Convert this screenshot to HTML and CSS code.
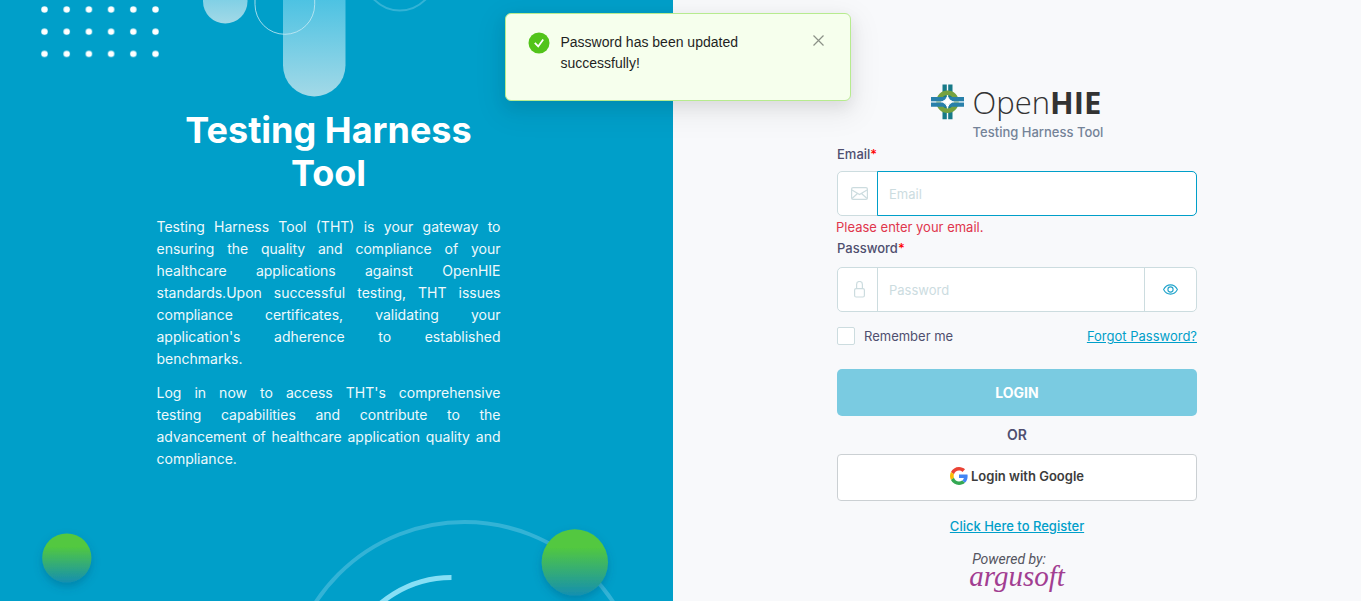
FILE: index.html
```html
<!DOCTYPE html>
<html lang="en">
<head>
<meta charset="utf-8">
<meta name="viewport" content="width=device-width, initial-scale=1">
<title>Testing Harness Tool - Login</title>
<link rel="stylesheet" href="styles.css">
</head>
<body>
<div class="page">
  <section class="intro">
    <svg class="decor decor-top" width="450" height="110" viewBox="0 0 450 110" aria-hidden="true">
      <defs>
        <linearGradient id="pill" x1="0" y1="0" x2="0" y2="1">
          <stop offset=".25" stop-color="#48c1e2"/>
          <stop offset="1" stop-color="#a3d9e7"/>
        </linearGradient>
        <pattern id="dots" x="33.400" y="-1.600" width="22.200" height="22.200" patternUnits="userSpaceOnUse">
          <circle cx="11.100" cy="11.100" r="3.200" fill="#fff"/>
        </pattern>
      </defs>
      <rect x="34" y="0" width="132" height="64" fill="url(#dots)"/>
      <rect x="203" y="-60" width="44.500" height="83.500" rx="22.250" fill="url(#pill)"/>
      <rect x="283" y="-40" width="62.500" height="136.500" rx="31.250" fill="url(#pill)"/>
      <rect x="255" y="-60" width="59.700" height="94.300" rx="29.850" fill="none" stroke="#c8eaf4" stroke-opacity=".8"/>
      <circle cx="399.800" cy="-25" r="35.500" fill="none" stroke="#33b3d6" stroke-width="2"/>
    </svg>
    <svg class="decor decor-bottom" width="673" height="101" viewBox="0 500 673 101" aria-hidden="true">
      <defs>
        <linearGradient id="ball" x1="0" y1="0" x2="0" y2="1">
          <stop offset=".27" stop-color="#52c83f"/>
          <stop offset="1" stop-color="#158fb0"/>
        </linearGradient>
        <filter id="shade" x="-50%" y="-50%" width="200%" height="200%">
          <feDropShadow dx="0" dy="4" stdDeviation="4" flood-color="#004a66" flood-opacity=".3"/>
        </filter>
      </defs>
      <circle cx="464.500" cy="700" r="178" fill="none" stroke="#33b3d6" stroke-width="4"/>
      <path d="M451.500 577.500A110 110 0 0 0 353.200 638" fill="none" stroke="#86dff5" stroke-width="5"/>
      <circle cx="66.800" cy="558" r="24.600" fill="url(#ball)" filter="url(#shade)"/>
      <circle cx="574.800" cy="562.500" r="33.200" fill="url(#ball)" filter="url(#shade)"/>
    </svg>
    <div class="intro-body">
      <h1 class="intro-title">Testing Harness Tool</h1>
      <p class="intro-text">Testing Harness Tool (THT) is your gateway to ensuring the quality and compliance of your healthcare applications against OpenHIE standards.Upon successful testing, THT issues compliance certificates, validating your application's adherence to established benchmarks.</p>
      <p class="intro-text">Log in now to access THT's comprehensive testing&nbsp;capabilities and contribute to the advancement of healthcare application quality and compliance.</p>
    </div>
  </section>

  <main class="panel">
    <form class="login" novalidate>
      <div class="brand">
        <svg class="brand-mark" width="33" height="36" viewBox="0 0 33 36" aria-hidden="true">
          <path d="M11.500 .4h4.300v34.800h-4.300zM17.200 .4h4.300v34.800h-4.300z" fill="#177a88"/>
          <circle cx="16.500" cy="17.800" r="9" fill="none" stroke="#76a23f" stroke-width="4.600"/>
          <path d="M0 13h33v4.300H0zM0 18.500h33v4.300H0z" fill="#2880aa"/>
          <path d="M0 17.900h10M23 17.900h10" stroke="#a9cfe0"/>
          <path d="M16.500 12.500q1.500 3.900 5.300 5.300-3.800 1.400-5.300 5.300-1.500-3.900-5.300-5.300 3.800-1.400 5.300-5.300z" fill="#fff" stroke="#fff"/>
        </svg>
        <div class="brand-words">
          <span class="brand-name">Open<b>HIE</b></span>
          <span class="brand-sub">Testing Harness Tool</span>
        </div>
      </div>

      <label class="label" for="email">Email<span class="required">*</span></label>
      <div class="field">
        <span class="addon">
          <svg width="17" height="13" viewBox="0 0 17 13" fill="none" stroke="#ccdcdf" stroke-width="1.200" aria-hidden="true"><rect x=".6" y=".6" width="15.800" height="11.800" rx="1.500"/><path d="M1 3l7.500 4.500L16 3M1 11.500l5.500-5M16 11.500l-5.500-5"/></svg>
        </span>
        <input class="input input-active" id="email" type="email" placeholder="Email">
      </div>
      <p class="error">Please enter your email.</p>

      <label class="label label-password" for="password">Password<span class="required">*</span></label>
      <div class="field">
        <span class="addon">
          <svg width="11" height="17" viewBox="0 0 11 17" fill="none" stroke="#ccdcdf" stroke-width="1.200" aria-hidden="true"><rect x=".6" y="7.600" width="9.800" height="8.400" rx="1.500"/><path d="M2.600 7.500V3.400a2.900 2.900 0 0 1 5.800 0v4.100"/></svg>
        </span>
        <input class="input input-middle" id="password" type="password" placeholder="Password">
        <button class="reveal" type="button" aria-label="Show password">
          <svg width="15" height="11" viewBox="0 0 15 11" fill="none" stroke="#1fa3cb" stroke-width="1.100" aria-hidden="true"><path d="M.6 5.500S3 .9 7.500.9s6.900 4.600 6.900 4.600-2.400 4.600-6.900 4.600S.6 5.500.6 5.500z"/><circle cx="7.500" cy="5.500" r="2.600"/></svg>
        </button>
      </div>

      <div class="options">
        <label class="remember"><input class="check" type="checkbox">Remember me</label>
        <a class="link" href="#">Forgot Password?</a>
      </div>

      <button class="submit" type="submit">LOGIN</button>
      <p class="or">OR</p>
      <button class="google" type="button">
        <svg class="google-mark" width="18" height="18" viewBox="0 0 48 48" aria-hidden="true">
          <path fill="#ea4335" d="M24 9.500c3.540 0 6.710 1.220 9.210 3.600l6.850-6.850C35.900 2.380 30.470 0 24 0 14.620 0 6.510 5.380 2.560 13.220l7.980 6.190C12.430 13.720 17.740 9.500 24 9.500z"/>
          <path fill="#4285f4" d="M46.980 24.550c0-1.570-.15-3.090-.38-4.550H24v9.020h12.940c-.58 2.960-2.260 5.480-4.780 7.180l7.730 6c4.510-4.180 7.090-10.360 7.090-17.650z"/>
          <path fill="#fbbc05" d="M10.530 28.590c-.48-1.450-.76-2.990-.76-4.590s.27-3.140.76-4.590l-7.980-6.190C.92 16.460 0 20.120 0 24c0 3.880.92 7.540 2.560 10.780l7.970-6.190z"/>
          <path fill="#34a853" d="M24 48c6.480 0 11.930-2.130 15.890-5.810l-7.730-6c-2.150 1.450-4.920 2.300-8.160 2.300-6.260 0-11.570-4.220-13.470-9.910l-7.980 6.190C6.510 42.620 14.620 48 24 48z"/>
        </svg>
        Login with Google
      </button>
      <a class="link register" href="#">Click Here to Register</a>
      <div class="powered">
        <span class="powered-by">Powered by:</span>
        <span class="powered-name">argusoft</span>
      </div>
    </form>
  </main>
</div>

<div class="toast" role="status">
  <svg class="toast-icon" width="22" height="22" viewBox="0 0 22 22" aria-hidden="true"><circle cx="11" cy="11" r="10.500" fill="#52c41a"/><path d="M6.800 10.800l3.400 3.600 5-7" fill="none" stroke="#fff" stroke-width="1.800"/></svg>
  <p class="toast-text">Password has been updated successfully!</p>
  <button class="toast-close" type="button" aria-label="Close">
    <svg width="11" height="11" viewBox="0 0 11 11" stroke="#8b9187" stroke-width="1.200" aria-hidden="true"><path d="M.5.5l10 10M10.500.5l-10 10"/></svg>
  </button>
</div>
</body>
</html>
```

FILE: styles.css
```css
* {
  box-sizing: border-box;
}

body {
  margin: 0;
  font-family: Inter, "Liberation Sans", sans-serif;
  font-size: 13px;
  color: #4f4f6f;
  background: #f8f9fb;
}

p,
h1 {
  margin: 0;
}

button,
input {
  font: inherit;
}

.page {
  display: grid;
  grid-template-columns: 673fr 688fr;
  min-height: 100vh;
  overflow: hidden;
}

.intro {
  position: relative;
  display: flex;
  justify-content: center;
  padding: 109px 16px 0 0;
  overflow: hidden;
  color: #fff;
  background: #009fc9;
}

.decor {
  position: absolute;
  left: 0;
}

.decor-top {
  top: 0;
}

.decor-bottom {
  bottom: 0;
}

.intro-body {
  position: relative;
  width: 344px;
}

.intro-title {
  margin-bottom: 21px;
  font-size: 36px;
  font-weight: 700;
  line-height: 43px;
  text-align: center;
}

.intro-text {
  margin-bottom: 12px;
  font-size: 14px;
  line-height: 22px;
  text-align: justify;
  color: #eef9fc;
}

.panel {
  display: flex;
  justify-content: center;
  padding-top: 84px;
}

.login {
  display: flex;
  flex-direction: column;
  width: 360px;
}

.brand {
  display: flex;
  justify-content: center;
  gap: 9px;
}

.brand-words {
  display: flex;
  flex-direction: column;
}

.brand-name {
  font-family: "Open Sans", sans-serif;
  font-size: 31px;
  font-weight: 300;
  line-height: 36px;
  color: #333;
}

.brand-name b {
  font-weight: 700;
}

.brand-sub {
  font-size: 13px;
  font-weight: 500;
  line-height: 24px;
  color: #748398;
}

.label {
  font-weight: 500;
  line-height: 20px;
  margin-bottom: 7px;
}

.required {
  color: #f00;
}

.field {
  display: flex;
  height: 45px;
  border: 1px solid #ccdcdf;
  border-radius: 5px;
  background: #fff;
}

.addon {
  display: flex;
  align-items: center;
  justify-content: center;
  width: 40px;
  padding-left: 3px;
}

.input {
  flex: 1;
  min-width: 0;
  margin: -1px;
  padding: 0 11px;
  border: 1px solid #ccdcdf;
  border-radius: 0 5px 5px 0;
  outline: 0;
  background: #fff;
}

.input-middle {
  border-radius: 0;
}

.input-active {
  border-color: #009fc9;
}

.input::placeholder {
  color: #ccdcdf;
  opacity: 1;
}

.reveal {
  display: flex;
  align-items: center;
  justify-content: center;
  width: 52px;
  padding: 0;
  border: 0;
  background: none;
}

.error {
  margin-left: -1px;
  line-height: 22px;
  color: #e0364c;
}

.label-password {
  margin-bottom: 9px;
}

.options {
  display: flex;
  align-items: center;
  justify-content: space-between;
  margin-top: 14px;
  line-height: 20px;
}

.remember {
  display: flex;
  align-items: center;
  gap: 9px;
}

.check {
  width: 18px;
  height: 18px;
  margin: 0;
  appearance: none;
  border: 1px solid #ccdcdf;
  border-radius: 2px;
  background: #fff;
}

.link {
  color: #009fc9;
  text-decoration: underline;
}

.submit {
  height: 47px;
  margin-top: 23px;
  border: 0;
  border-radius: 5px;
  font-size: 14px;
  font-weight: 700;
  color: #fff;
  background: #7acbe1;
}

.or {
  font-size: 14px;
  font-weight: 600;
  line-height: 38px;
  text-align: center;
}

.google {
  display: flex;
  align-items: center;
  justify-content: center;
  gap: 3px;
  height: 47px;
  padding: 0 0 3px;
  border: 1px solid #cbd0d3;
  border-radius: 4px;
  font-weight: 600;
  color: #3c3c3c;
  background: #fff;
}

.register {
  align-self: center;
  margin-top: 15px;
  font-weight: 500;
  line-height: 20px;
}

.powered {
  display: flex;
  flex-direction: column;
  align-items: center;
  margin-top: 14px;
}

.powered-by {
  padding-right: 16px;
  font-family: Roboto, sans-serif;
  font-size: 14px;
  font-style: italic;
  line-height: 18px;
  color: #555560;
}

.powered-name {
  font-family: "Liberation Serif", serif;
  font-size: 29px;
  font-style: italic;
  line-height: 16px;
  color: #a23e91;
}

.toast {
  position: absolute;
  top: 13px;
  left: calc(50% - 176px);
  display: flex;
  width: 346px;
  height: 88px;
  padding: 18px 26px 0 22px;
  border: 1px solid #b7eb8f;
  border-radius: 6px;
  background: #f6ffed;
  box-shadow: 0 6px 16px rgba(0, 0, 0, .08), 0 9px 28px 8px rgba(0, 0, 0, .05);
}

.toast-icon {
  flex: none;
  margin-right: 11px;
}

.toast-text {
  flex: 1;
  padding-right: 40px;
  font-family: "Liberation Sans", sans-serif;
  font-size: 14px;
  line-height: 21px;
  color: #1f1f1f;
}

.toast-close {
  display: flex;
  align-self: flex-start;
  margin-top: 3px;
  padding: 0;
  border: 0;
  background: none;
}
```
